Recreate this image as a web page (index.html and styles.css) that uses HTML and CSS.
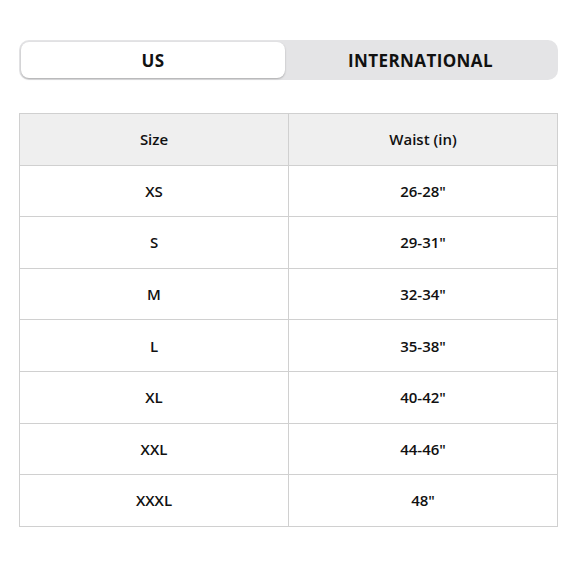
FILE: index.html
```html
<!DOCTYPE html>
<html>
<head>
<meta charset="utf-8">
<link rel="stylesheet" href="styles.css">
</head>
<body>
<div class="wrap">
  <div class="toggle">
    <div class="seg active">US</div>
    <div class="seg">INTERNATIONAL</div>
  </div>
  <table class="chart">
    <thead>
      <tr><th>Size</th><th>Waist (in)</th></tr>
    </thead>
    <tbody>
      <tr><td>XS</td><td>26-28"</td></tr>
      <tr><td>S</td><td>29-31"</td></tr>
      <tr><td>M</td><td>32-34"</td></tr>
      <tr><td>L</td><td>35-38"</td></tr>
      <tr><td>XL</td><td>40-42"</td></tr>
      <tr><td>XXL</td><td>44-46"</td></tr>
      <tr><td>XXXL</td><td>48"</td></tr>
    </tbody>
  </table>
</div>
</body>
</html>
```
FILE: styles.css
```css
html, body {
  margin: 0;
  padding: 0;
  background: #fff;
}
body {
  font-family: "Open Sans", Lato, sans-serif;
  color: #111;
}
.wrap {
  width: 539px;
  padding: 40px 0 0 19px;
}
.toggle {
  display: flex;
  height: 40px;
  box-sizing: border-box;
  padding: 2px;
  background: #e4e4e6;
  border-radius: 10px;
}
.seg {
  flex: 1;
  display: flex;
  align-items: center;
  justify-content: center;
  font-size: 17px;
  font-weight: 700;
  letter-spacing: 0.4px;
}
.seg.active {
  flex: 0 0 264px;
  background: #fff;
  border-radius: 8px;
  box-shadow: 0 1px 2px rgba(0,0,0,0.25);
}
.chart {
  margin-top: 33px;
  width: 539px;
  border-collapse: collapse;
  table-layout: fixed;
  font-size: 15px;
  font-weight: 600;
}
.chart th, .chart td {
  border: 1px solid #d0d0d0;
  text-align: center;
  padding: 0;
  height: 50.6px;
}
.chart th:first-child, .chart td:first-child {
  width: 268px;
}
.chart thead th {
  background: #efefef;
  font-weight: 600;
}
```
